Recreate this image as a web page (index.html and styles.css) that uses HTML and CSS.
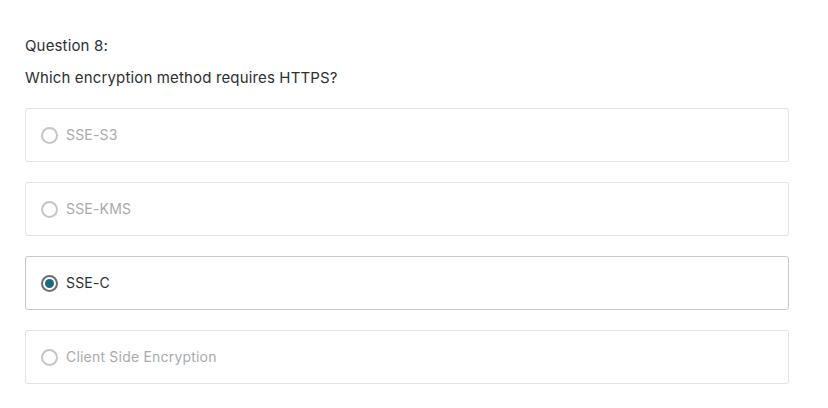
FILE: index.html
```html
<!DOCTYPE html>
<html>
<head>
<meta charset="utf-8">
<link rel="stylesheet" href="styles.css">
</head>
<body>
<div class="quiz">
  <div class="q-num">Question 8:</div>
  <div class="q-text">Which encryption method requires HTTPS?</div>
  <div class="options">
    <label class="option disabled"><span class="radio"></span><span class="label">SSE-S3</span></label>
    <label class="option disabled"><span class="radio"></span><span class="label">SSE-KMS</span></label>
    <label class="option selected"><span class="radio"><span class="dot"></span></span><span class="label">SSE-C</span></label>
    <label class="option disabled"><span class="radio"></span><span class="label">Client Side Encryption</span></label>
  </div>
</div>
</body>
</html>
```
FILE: styles.css
```css
html, body {
  margin: 0;
  padding: 0;
  background: #fff;
}
body {
  font-family: Inter, "Liberation Sans", sans-serif;
  color: #2d2f31;
}
.quiz {
  width: 764px;
  padding: 36px 0 0 25px;
}
.q-num {
  font-size: 15px;
  line-height: 20px;
  letter-spacing: 0.15px;
}
.q-text {
  font-size: 15px;
  line-height: 20px;
  letter-spacing: 0.15px;
  margin-top: 12px;
}
.options {
  margin-top: 20px;
  display: flex;
  flex-direction: column;
  gap: 20px;
}
.option {
  box-sizing: border-box;
  height: 54px;
  border: 1px solid #e3e3e5;
  border-radius: 3px;
  display: flex;
  align-items: center;
  padding-left: 15px;
}
.option.selected {
  border-color: #c9c9cc;
}
.radio {
  box-sizing: border-box;
  width: 17px;
  height: 17px;
  border-radius: 50%;
  border: 2px solid #c4c6ca;
  display: flex;
  align-items: center;
  justify-content: center;
  flex: none;
}
.selected .radio {
  border-color: #6a6f73;
}
.dot {
  width: 9px;
  height: 9px;
  border-radius: 50%;
  background: #1b6a82;
}
.label {
  margin-left: 8px;
  font-size: 14px;
  line-height: 20px;
  letter-spacing: 0.2px;
}
.disabled .label {
  color: #a8abaf;
}
.selected .label {
  color: #2d2f31;
}
```
